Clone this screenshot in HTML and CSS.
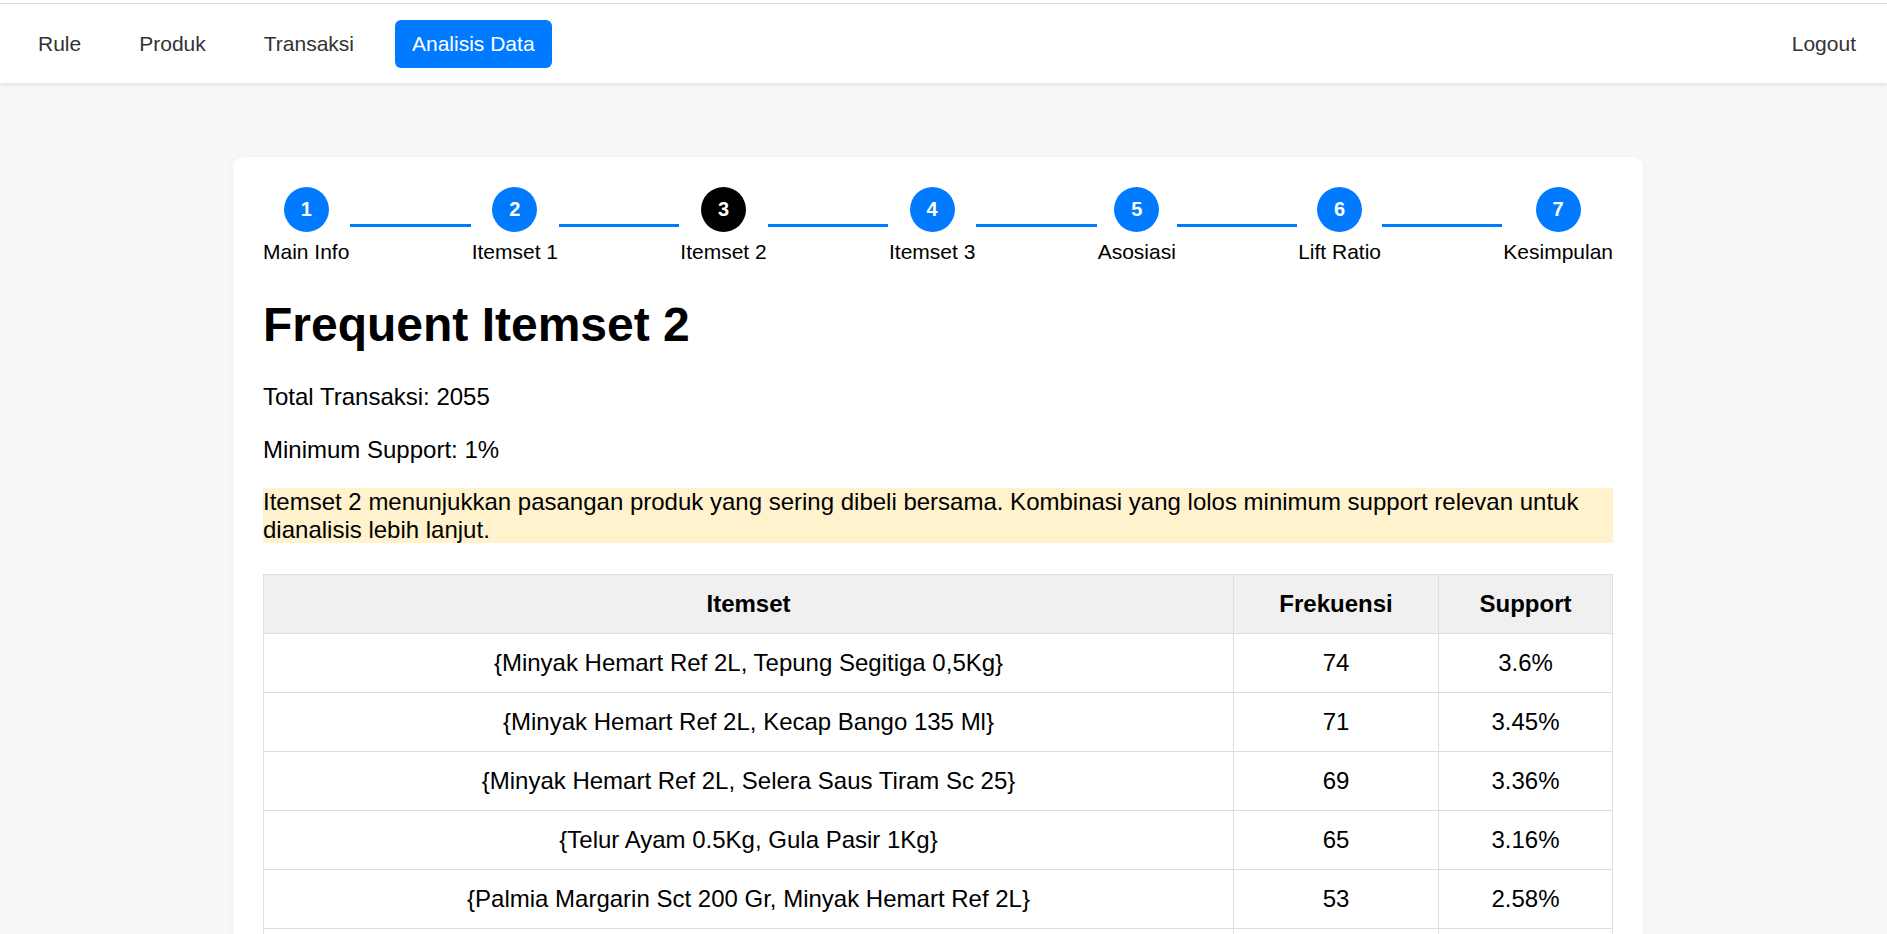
FILE: index.html
```html
<!DOCTYPE html>
<html lang="id">
<head>
<meta charset="utf-8">
<title>Analisis Data - Frequent Itemset 2</title>
<link rel="stylesheet" href="styles.css">
</head>
<body>
<div class="topstrip"></div>
<nav class="navbar">
  <div class="nav-left">
    <a class="nav-link" href="#">Rule</a>
    <a class="nav-link" href="#">Produk</a>
    <a class="nav-link" href="#">Transaksi</a>
    <a class="nav-link active" href="#">Analisis Data</a>
  </div>
  <a class="nav-link" href="#">Logout</a>
</nav>

<main class="page">
  <section class="card">
    <div class="stepper">
      <div class="step"><span class="circle">1</span><span class="label">Main Info</span></div>
      <div class="connector"></div>
      <div class="step"><span class="circle">2</span><span class="label">Itemset 1</span></div>
      <div class="connector"></div>
      <div class="step"><span class="circle current">3</span><span class="label">Itemset 2</span></div>
      <div class="connector"></div>
      <div class="step"><span class="circle">4</span><span class="label">Itemset 3</span></div>
      <div class="connector"></div>
      <div class="step"><span class="circle">5</span><span class="label">Asosiasi</span></div>
      <div class="connector"></div>
      <div class="step"><span class="circle">6</span><span class="label">Lift Ratio</span></div>
      <div class="connector"></div>
      <div class="step"><span class="circle">7</span><span class="label">Kesimpulan</span></div>
    </div>

    <h1 class="title">Frequent Itemset 2</h1>
    <p class="info">Total Transaksi: 2055</p>
    <p class="info">Minimum Support: 1%</p>
    <p class="note">Itemset 2 menunjukkan pasangan produk yang sering dibeli bersama. Kombinasi yang lolos minimum support relevan untuk dianalisis lebih lanjut.</p>

    <table class="data-table">
      <colgroup>
        <col class="col-itemset">
        <col class="col-freq">
        <col class="col-support">
      </colgroup>
      <thead>
        <tr><th>Itemset</th><th>Frekuensi</th><th>Support</th></tr>
      </thead>
      <tbody>
        <tr><td>{Minyak Hemart Ref 2L, Tepung Segitiga 0,5Kg}</td><td>74</td><td>3.6%</td></tr>
        <tr><td>{Minyak Hemart Ref 2L, Kecap Bango 135 Ml}</td><td>71</td><td>3.45%</td></tr>
        <tr><td>{Minyak Hemart Ref 2L, Selera Saus Tiram Sc 25}</td><td>69</td><td>3.36%</td></tr>
        <tr><td>{Telur Ayam 0.5Kg, Gula Pasir 1Kg}</td><td>65</td><td>3.16%</td></tr>
        <tr><td>{Palmia Margarin Sct 200 Gr, Minyak Hemart Ref 2L}</td><td>53</td><td>2.58%</td></tr>
        <tr><td>{Minyak Hemart Ref 2L, Gula Pasir 1Kg}</td><td>51</td><td>2.48%</td></tr>
        <tr><td>{Telur Ayam 0.5Kg, Minyak Hemart Ref 2L}</td><td>49</td><td>2.38%</td></tr>
      </tbody>
    </table>
  </section>
</main>
</body>
</html>
```

FILE: styles.css
```css
html, body {
  margin: 0;
  padding: 0;
}

body {
  background: #f8f8f8;
  font-family: "Liberation Sans", Arial, sans-serif;
  color: #000;
}

.topstrip {
  height: 3px;
  background: #fff;
  border-bottom: 1px solid #e2e2e2;
}

.navbar {
  position: relative;
  z-index: 1;
  height: 79px;
  background: #fff;
  box-shadow: 0 2px 5px rgba(0, 0, 0, 0.09);
  display: flex;
  align-items: center;
  justify-content: space-between;
  padding: 0 13px 0 20px;
}

.nav-left {
  display: flex;
  align-items: center;
  gap: 22px;
}

.nav-link {
  display: block;
  padding: 12px 18px;
  font-size: 21px;
  line-height: 24px;
  color: #333;
  text-decoration: none;
  border-radius: 6px;
}

.nav-link.active {
  background: #007bff;
  color: #fff;
  padding: 12px 17px;
  margin-left: 1px;
}

.page {
  padding: 74px 11px 40px 0;
}

.card {
  width: 1350px;
  margin: 0 auto;
  background: #fff;
  border-radius: 10px;
  box-shadow: 0 2px 8px rgba(0, 0, 0, 0.05);
  padding: 30px;
}

.stepper {
  display: flex;
  align-items: center;
}

.step {
  flex: none;
  display: flex;
  flex-direction: column;
  align-items: center;
}

.circle {
  width: 45px;
  height: 45px;
  border-radius: 50%;
  background: #007bff;
  color: #fff;
  font-weight: bold;
  font-size: 20px;
  display: flex;
  align-items: center;
  justify-content: center;
}

.circle.current {
  background: #000;
}

.label {
  margin-top: 8px;
  font-size: 21px;
  line-height: 24px;
  white-space: nowrap;
}

.connector {
  flex: 1;
  height: 3px;
  background: #007bff;
  margin: 0 1px;
}

.title {
  font-size: 48px;
  font-weight: bold;
  margin: 33px 0 31px;
  line-height: 55px;
}

.info {
  font-size: 24px;
  line-height: 27.6px;
  margin: 0 0 25px;
}

.note {
  font-size: 24px;
  line-height: 27.6px;
  margin: 0;
  background: #fff2cc;
}

.data-table {
  width: 100%;
  margin-top: 31px;
  border-collapse: collapse;
  table-layout: fixed;
  font-size: 24px;
  line-height: 28px;
}

.col-itemset { width: 970px; }
.col-freq { width: 205px; }

.data-table th,
.data-table td {
  border: 1px solid #ddd;
  padding: 15px;
  text-align: center;
}

.data-table th {
  background: #f0f0f0;
  font-weight: bold;
}
```
